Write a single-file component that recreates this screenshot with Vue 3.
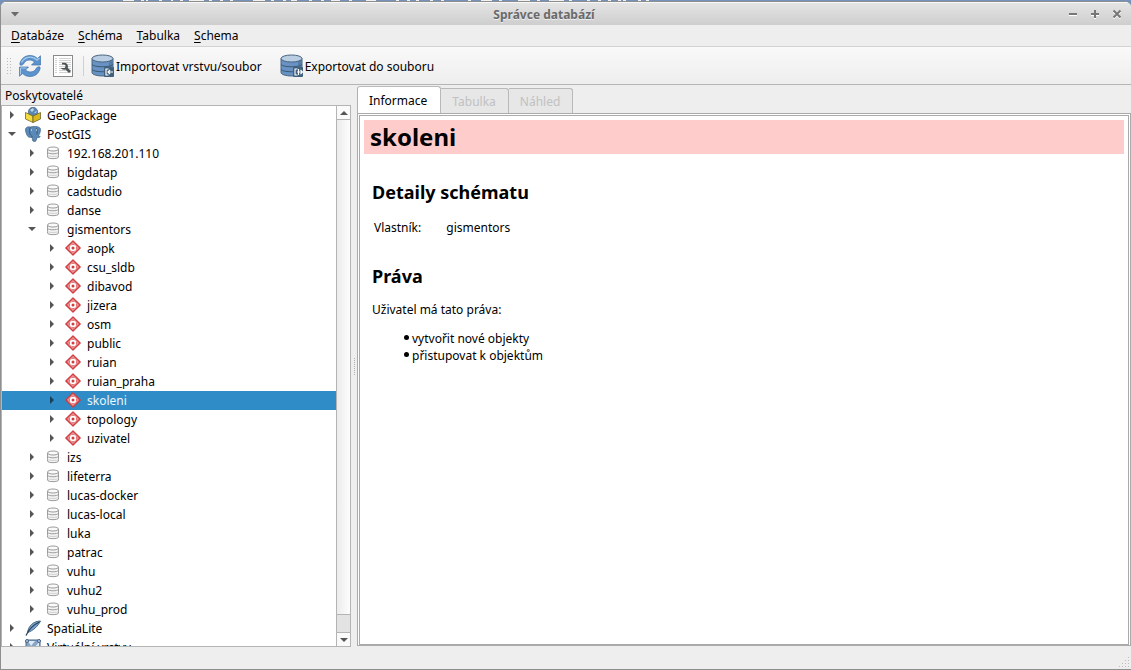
<script setup>
import { ref } from 'vue'

const menus = [
  { key: 'D', rest: 'atabáze' },
  { key: 'S', rest: 'chéma' },
  { key: 'T', rest: 'abulka' },
  { key: 'S', rest: 'chema' },
]

const db = (label) => ({ label, level: 1, icon: 'db' })
const schema = (label) => ({ label, level: 2, icon: 'schema' })

const rows = [
  { label: 'GeoPackage', level: 0, icon: 'package' },
  { label: 'PostGIS', level: 0, icon: 'postgis', open: true },
  ...['192.168.201.110', 'bigdatap', 'cadstudio', 'danse'].map(db),
  { ...db('gismentors'), open: true },
  ...['aopk', 'csu_sldb', 'dibavod', 'jizera', 'osm', 'public', 'ruian', 'ruian_praha', 'skoleni', 'topology', 'uzivatel'].map(schema),
  ...['izs', 'lifeterra', 'lucas-docker', 'lucas-local', 'luka', 'patrac', 'vuhu', 'vuhu2', 'vuhu_prod'].map(db),
  { label: 'SpatiaLite', level: 0, icon: 'feather' },
  { label: 'Virtuální vrstvy', level: 0, icon: 'virtual' },
]

const tabs = [
  { label: 'Informace', enabled: true },
  { label: 'Tabulka', enabled: false },
  { label: 'Náhled', enabled: false },
]

const selected = ref('skoleni')
const rights = ['vytvořit nové objekty', 'přistupovat k objektům']
</script>

<template>
  <div class="desktop">
    <svg class="backdrop" width="660" height="1" viewBox="0 0 660 1" aria-hidden="true">
      <path
        d="M123 .5h11M141 .5h3M146 .5h2M159 .5h3M171 .5h2M180 .5h3M189 .5h15M209 .5h3M220 .5h3M230 .5h3M253 .5h12M271 .5h3M283 .5h3M291 .5h6M309 .5h3M321 .5h3M331 .5h9M349 .5h3M366 .5h10M396 .5h3M407 .5h3M416 .5h3M430 .5h3M441 .5h3M468 .5h3M481 .5h11M499 .5h3M518 .5h12M537 .5h3M549 .5h15M569 .5h3M587 .5h3M598 .5h3M608 .5h3M618 .5h3M623 .5h3M638 .5h3M646 .5h3"
        stroke="#f2f2f0"
      />
    </svg>
    <div class="window">
      <header class="titlebar">
        <button class="winbtn" aria-label="Nabídka okna">
          <svg width="10" height="10" viewBox="0 0 10 10"><path d="M1 3h8L5 7.500z" fill="#6b6b6b" /></svg>
        </button>
        <span class="title">Správce databází</span>
        <div class="wincontrols">
          <button class="winbtn" aria-label="Minimalizovat">
            <svg width="10" height="10" viewBox="0 0 10 10"><path d="M1 6h8" stroke="#fff" stroke-width="2" /><path d="M1 5h8" stroke="#777" stroke-width="2" /></svg>
          </button>
          <button class="winbtn" aria-label="Maximalizovat">
            <svg width="10" height="10" viewBox="0 0 10 10"><path d="M1 6h8M5 2v8" stroke="#fff" stroke-width="2" /><path d="M1 5h8M5 1v8" stroke="#777" stroke-width="2" /></svg>
          </button>
          <button class="winbtn" aria-label="Zavřít">
            <svg width="10" height="10" viewBox="0 0 10 10"><path d="M1.500 2.500l7 7M8.500 2.500l-7 7" stroke="#fff" stroke-width="2" /><path d="M1.500 1.500l7 7M8.500 1.500l-7 7" stroke="#777" stroke-width="2" /></svg>
          </button>
        </div>
      </header>

      <nav class="menubar">
        <button v-for="m in menus" :key="m.rest"><u>{{ m.key }}</u>{{ m.rest }}</button>
      </nav>

      <div class="toolbar">
        <span class="grip"></span>
        <button class="tool" aria-label="Obnovit">
          <svg width="24" height="24" viewBox="0 0 24 24" stroke-linejoin="round">
            <path d="M2 11V9C3.500 4 7.500 1.500 12 1.500c3 0 5.500 1 7.300 3L22.500 1.800V11h-9l3-3C13.500 5.200 8.500 5.500 6.500 8.500 5.500 10.500 4 11.500 2 11z" fill="#5c93cc" stroke="#3f74ae" stroke-width="0.700" />
            <path d="M22 13v2c-1.500 5-5.500 7.500-10 7.500-3 0-5.500-1-7.300-3L1.500 22.200V13h9l-3 3c3 2.800 8 2.500 10-.5 1-2 2.500-3 4.500-2.500z" fill="#5c93cc" stroke="#3f74ae" stroke-width="0.700" />
            <path d="M3.500 8.500C6 3.500 13.500.500 19 6l2.500-2" fill="none" stroke="#a8caeb" stroke-width="1.300" />
            <path d="M2.500 20.500V14h6" fill="none" stroke="#a8caeb" />
          </svg>
        </button>
        <button class="tool sql" aria-label="SQL okno">
          <svg width="20" height="22" viewBox="0 0 20 22">
            <rect x=".5" y=".5" width="19" height="21" fill="#fff" stroke="#8a8a8a" />
            <path d="M2 3.500h2M2 5.500h2M2 7.500h2M2 9.500h2M2 11.500h2M2 13.500h2M2 15.500h2M2 17.500h2M6 3.500h12M6 5.500h12M6 7.500h12M6 9.500h12M6 11.500h12M6 13.500h12M6 15.500h12M6 17.500h12" stroke="#d2d2d2" />
            <path d="M9 8c3-1 6 0 6 3.500 0 1-.3 1.500-.3 1.500l3.300 3-2 2-3.500-3.500c-2 .5-4 0-4.500-1.500h3.500c1.500-1 1.500-3-.5-3.500H9z" fill="#4e5558" />
          </svg>
        </button>
        <span class="sep"></span>
        <button v-for="(t, i) in ['Importovat vrstvu/soubor', 'Exportovat do souboru']" :key="t" class="tool labelled">
          <svg width="24" height="24" viewBox="0 0 24 24">
            <path d="M1 4.500v14c0 2 5 3.500 10.500 3.500s10.500-1.500 10.500-3.500v-14z" fill="#6792c3" stroke="#4a6580" />
            <path d="M18 6h3.500v12.500l-3.500 2z" fill="#557ba8" />
            <path d="M1 10.500c2 3 19 3 21 0M1 15.500c2 3 19 3 21 0" fill="none" stroke="#3d5872" />
            <ellipse cx="11.500" cy="4.500" rx="10.500" ry="3.500" fill="#b9cde3" stroke="#4a6580" />
            <rect x="13" y="13" width="10" height="10" rx="1" fill="#40617d" />
            <path v-if="i === 0" d="M17.500 15h-2.500v6h2.500M22 18h-5m2-2l-2 2 2 2" fill="none" stroke="#fff" stroke-width="1.200" />
            <path v-else d="M17.500 15h-2.500v6h2.500M17 18h5.500m-2-2l2 2-2 2M18.500 15v6" fill="none" stroke="#fff" stroke-width="1.100" />
          </svg>
          <span>{{ t }}</span>
        </button>
      </div>

      <main class="body">
        <section class="left">
          <h2 class="dock-title">Poskytovatelé</h2>
          <div class="treebox">
            <ul class="tree" role="tree" aria-label="Poskytovatelé">
              <li
                v-for="r in rows"
                :key="r.label"
                role="treeitem"
                :aria-selected="selected === r.label"
                :class="['row', 'level' + r.level, { selected: selected === r.label }]"
                @click="selected = r.label"
              >
                <svg class="arrow" width="10" height="10" viewBox="0 0 10 10">
                  <path :d="r.open ? 'M1 3h8L5 7z' : 'M3 1v8l4-4z'" />
                </svg>
                <svg class="icon" width="16" height="16" viewBox="0 0 16 16">
                  <template v-if="r.icon === 'db'">
                    <path d="M2.500 4v8c0 2.200 11 2.200 11 0V4" fill="#f3f3f3" stroke="#9c9c9c" />
                    <path d="M2.500 7.300c1 2 10 2 11 0" fill="none" stroke="#9c9c9c" />
                    <path d="M2.500 10.300c1 1.600 10 1.600 11 0" fill="none" stroke="#d2d2d2" />
                    <ellipse cx="8" cy="4" rx="5.500" ry="2" fill="#fafafa" stroke="#9c9c9c" />
                  </template>
                  <template v-else-if="r.icon === 'schema'">
                    <path d="M8 .8L15.200 8 8 15.200.8 8z" fill="#de6163" stroke="#d03c3f" stroke-linejoin="round" stroke-width="1.200" />
                    <path d="M8 2.700L13.300 8 8 13.300 2.700 8z" fill="none" stroke="#f5c4c5" stroke-width=".7" />
                    <circle cx="8" cy="8" r="3.200" fill="#fff" />
                    <circle cx="8" cy="8" r="1.500" fill="#d03c3f" />
                  </template>
                  <template v-else-if="r.icon === 'package'">
                    <circle cx="8" cy="5" r="4.700" fill="#5b87b5" stroke="#34536f" stroke-width=".6" />
                    <path d="M.5 5.500L8 9v6.500L.5 12z" fill="#f4dc3e" stroke="#5e5520" stroke-width=".7" />
                    <path d="M15.500 5.500L8 9v6.500l7.500-3.500z" fill="#d9b91e" stroke="#5e5520" stroke-width=".7" />
                    <path d="M5 3l3-2 1 2-2 2zM9 5.500l3-2-1 2.500z" fill="#bed4e8" />
                  </template>
                  <template v-else-if="r.icon === 'postgis'">
                    <path d="M.5 4C.5 1 3 .5 5.500 1 8 .2 14 0 15.300 2.500c.7 3-1 6-2 7.500l2 .5c-1 1.200-2.500 1.300-3.500 1-.3 3-.8 4-2.500 4-2 0-2-1.500-2-4-2 0-2.800-.5-3 0C2 10.500.8 7 .5 4z" fill="#5b89b8" stroke="#3b607f" stroke-width=".7" />
                    <path d="M5.500 1.500c-1.500 2-.8 4-.8 5.500 0 2 2.300 2.500 2.600 4M11 2c2 2 1 4 .8 6.500" fill="none" stroke="#2f526f" stroke-width=".8" />
                    <path d="M6 4h1M11 4h1" stroke="#fff" />
                  </template>
                  <template v-else-if="r.icon === 'feather'">
                    <path d="M15.500 1C9 1 3.500 5.500 2.500 12.500 8 11 13 6 15.500 1z" fill="#78a5d2" stroke="#34506a" stroke-width=".8" />
                    <path d="M14.500 2C9 4.500 4 9 1 15.500" fill="none" stroke="#263f58" stroke-width="1.200" />
                  </template>
                  <template v-else>
                    <path d="M1 1h14v14H1z" fill="#86a5c7" stroke="#466789" />
                    <path d="M3 2l3 5 4-5zM10 8l4-5v8z" fill="#dfeaf5" />
                    <circle cx="2" cy="2" r="1.500" fill="#b9cde3" stroke="#466789" /><circle cx="14" cy="2" r="1.500" fill="#b9cde3" stroke="#466789" />
                  </template>
                </svg>
                <span>{{ r.label }}</span>
              </li>
            </ul>
            <div class="scrollbar">
              <button aria-label="Nahoru"><svg width="8" height="4" viewBox="0 0 8 4"><path d="M0 4h8L4 0z" fill="#555" /></svg></button>
              <div class="track"><div class="thumb"></div></div>
              <button aria-label="Dolů"><svg width="8" height="4" viewBox="0 0 8 4"><path d="M0 0h8L4 4z" fill="#555" /></svg></button>
            </div>
          </div>
        </section>

        <div class="splitter"><span></span></div>

        <section class="right">
          <div class="tabs" role="tablist">
            <button v-for="t in tabs" :key="t.label" role="tab" :disabled="!t.enabled" :aria-selected="t.enabled">{{ t.label }}</button>
          </div>
          <div class="pane">
            <article class="page" role="tabpanel">
              <h1>{{ selected }}</h1>
              <div class="content">
                <h2>Detaily schématu</h2>
                <table>
                  <tbody>
                    <tr><th scope="row">Vlastník:</th><td>gismentors</td></tr>
                  </tbody>
                </table>
                <h2>Práva</h2>
                <p>Uživatel má tato práva:</p>
                <ul>
                  <li v-for="r in rights" :key="r">{{ r }}</li>
                </ul>
              </div>
            </article>
          </div>
        </section>
      </main>

      <footer class="status">
        <svg width="12" height="12" viewBox="0 0 12 12" fill="#bdbdbd"><path d="M10 1h1v1h-1zM7 4h1v1H7zM10 4h1v1h-1zM4 7h1v1H4zM7 7h1v1H7zM10 7h1v1h-1zM1 10h1v1H1zM4 10h1v1H4zM7 10h1v1H7zM10 10h1v1h-1z" /></svg>
      </footer>
    </div>
  </div>
</template>

<style>
body {
  margin: 0;
}
</style>

<style scoped>
* {
  box-sizing: border-box;
}
.desktop {
  height: 100vh;
  display: flex;
  flex-direction: column;
  background: #7492bb;
  font: 12px/18px "Noto Sans", sans-serif;
  color: #000;
  overflow: hidden;
}
button {
  font: inherit;
  color: inherit;
  background: none;
  border: 0;
  padding: 0;
  margin: 0;
}
.backdrop {
  flex: none;
  display: block;
}
.window {
  flex: 1;
  min-height: 0;
  display: flex;
  flex-direction: column;
  background: #eee;
  border: solid #8e8e8e;
  border-width: 1px 0 1px 1px;
  border-radius: 6px 6px 0 0;
  overflow: hidden;
}
.titlebar {
  flex: none;
  height: 23px;
  display: flex;
  align-items: center;
  justify-content: space-between;
  padding: 0 8px;
  background: linear-gradient(#e4e4e4, #cecece);
  border-top: 1px solid #f8f8f8;
}
.title {
  flex: 1;
  padding-top: 2px;
  text-align: center;
  font-weight: bold;
  color: #6a6a6a;
  text-shadow: 0 1px #eee;
}
.winbtn {
  width: 12px;
  height: 12px;
  display: grid;
  place-items: center;
}
.wincontrols {
  display: flex;
  gap: 10px;
}
.menubar {
  flex: none;
  height: 22px;
  display: flex;
  align-items: center;
  gap: 14px;
  padding: 0 10px;
  border-bottom: 1px solid #d2d2d2;
}
.menubar u {
  text-underline-offset: 2px;
}
.toolbar {
  flex: none;
  height: 38px;
  display: flex;
  align-items: center;
  padding: 0 5px;
  background: linear-gradient(#f9f9f9, #eee);
  border-bottom: 1px solid #b5b5b5;
}
.grip {
  width: 5px;
  height: 17px;
  background: radial-gradient(circle, #bbb 1px, transparent 1px) 0 0 / 3px 3px;
}
.tool {
  display: flex;
  align-items: center;
  margin-left: 7px;
}
.tool.sql {
  margin-left: 11px;
}
.tool span {
  padding-top: 2px;
}
.sep {
  width: 1px;
  height: 20px;
  background: #d0d0d0;
  margin: 0 7px 0 10px;
}
.tool.labelled {
  margin: 0 18px 0 0;
  gap: 1px;
}
.body {
  flex: 1;
  min-height: 0;
  display: flex;
}
.left {
  flex: 0 0 350px;
  min-width: 0;
  display: flex;
  flex-direction: column;
}
.dock-title {
  margin: 0;
  padding: 2px 4px 0;
  height: 20px;
  font-size: 12px;
  line-height: 18px;
  font-weight: normal;
}
.treebox {
  flex: 1;
  min-height: 0;
  display: flex;
  background: #fff;
  border: 1px solid #b4b4b4;
}
.tree {
  flex: 1;
  min-width: 0;
  margin: 0;
  padding: 0;
  list-style: none;
  overflow: hidden;
}
.row {
  height: 19px;
  display: flex;
  align-items: center;
  padding-left: 5px;
  white-space: nowrap;
}
.level1 {
  padding-left: 25px;
}
.level2 {
  padding-left: 45px;
}
.arrow {
  fill: #555;
  margin: 0 8px 1px 0;
}
.icon {
  margin: 0 6px 1px 0;
}
.selected {
  background: #308cc6;
  color: #eaf5fc;
}
.selected .arrow {
  fill: #17405c;
}
.scrollbar {
  width: 14px;
  display: flex;
  flex-direction: column;
  border-left: 1px solid #b4b4b4;
  background: linear-gradient(90deg, #ececec, #fdfdfd);
}
.scrollbar button {
  height: 13px;
  display: grid;
  place-items: center;
  background: #fafafa;
}
.track {
  flex: 1;
  display: flex;
  flex-direction: column;
  justify-content: flex-end;
  border: solid #b4b4b4;
  border-width: 1px 0;
}
.thumb {
  height: 18px;
  background: #e3e3e3;
  border-top: 1px solid #b4b4b4;
}
.splitter {
  width: 6px;
  flex: none;
  display: grid;
  place-items: center;
}
.splitter span {
  height: 17px;
  border-left: 1px dotted #b0b0b0;
}
.right {
  flex: 1;
  min-width: 0;
  display: flex;
  flex-direction: column;
  padding: 1px 0;
}
.tabs {
  height: 27px;
  flex: none;
  display: flex;
  align-items: flex-end;
}
.tabs button {
  height: 25px;
  padding: 1px 12px 0 11px;
  border: 1px solid #b9b9b9;
  border-left: 0;
  border-radius: 0 3px 0 0;
  border-bottom: 0;
  background: #e7e7e7;
}
.tabs button:disabled {
  color: #c1c1c1;
}
.tabs button[aria-selected="true"] {
  height: 27px;
  padding: 1px 13px 0 11px;
  border-left: 1px solid #b0b0b0;
  border-radius: 3px 3px 0 0;
  background: #fff;
}
.pane {
  flex: 1;
  min-height: 0;
  display: flex;
  padding: 1px 1px 0;
  background: #fff;
  border: 1px solid #aaa;
}
.page {
  flex: 1;
  border: 1px solid #aaa;
  padding: 4px;
}
.page h1 {
  margin: 0;
  padding: 0 6px;
  height: 34px;
  font-size: 24px;
  line-height: 34px;
  background: #fcc;
}
.content {
  padding: 0 8px;
}
.content h2 {
  margin: 26px 0 12px;
  font-size: 18px;
  line-height: 25px;
}
.content table {
  border-spacing: 2px;
  line-height: 17px;
}
.content th,
.content td {
  padding: 0;
  font-weight: normal;
  text-align: left;
}
.content th {
  padding-right: 23px;
}
.content p {
  margin: 0 0 11px;
}
.content ul {
  margin: 0;
  padding-left: 40px;
  list-style: none;
}
.content li {
  line-height: 17px;
  position: relative;
}
.content li::before {
  content: "";
  position: absolute;
  left: -8px;
  top: 5px;
  width: 5px;
  height: 5px;
  border-radius: 50%;
  background: #000;
}
.status {
  flex: none;
  height: 22px;
  display: flex;
  align-items: flex-end;
  justify-content: flex-end;
  padding: 1px;
}
</style>
